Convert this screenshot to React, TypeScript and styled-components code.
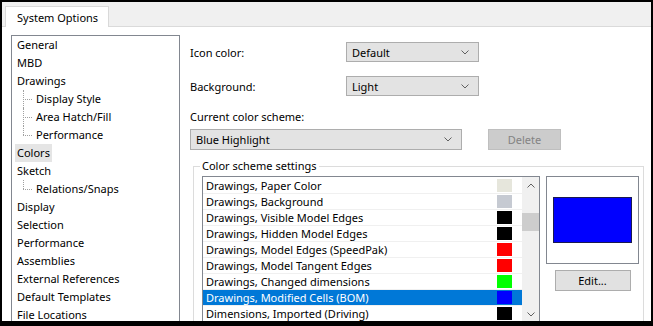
import React from "react";
import styled, { createGlobalStyle } from "styled-components";

const GlobalStyle = createGlobalStyle`
  html, body {
    margin: 0;
    padding: 0;
    background: #000;
  }
  body {
    font-family: "Noto Sans", "Open Sans", sans-serif;
    font-size: 11px;
    color: #000;
  }
`;

const Frame = styled.div`
  width: 653px;
  height: 326px;
  box-sizing: border-box;
  border: solid #000;
  border-width: 2px 2px 5px 2px;
  background: #fff;
  overflow: hidden;
  display: flex;
  flex-direction: column;
`;

const TabStrip = styled.div`
  height: 24px;
  background: #f0f0f0;
  border-bottom: 1px solid #dadada;
  display: flex;
  align-items: flex-end;
  padding-left: 3px;
  flex-shrink: 0;
`;

const Tab = styled.div`
  height: 20px;
  margin-bottom: -1px;
  padding: 0 10px 0 11px;
  background: #fff;
  border: 1px solid #d9d9d9;
  border-bottom: none;
  display: flex;
  align-items: center;
`;

const Body = styled.div`
  flex: 1;
  display: flex;
  padding: 8px 0 0 9px;
  gap: 10px;
  min-height: 0;
`;

const Tree = styled.div`
  width: 167px;
  flex-shrink: 0;
  border: 1px solid #828790;
  border-bottom: none;
`;

const TreeItem = styled.div<{ $child?: boolean; $selected?: boolean; $last?: boolean }>`
  position: relative;
  height: 18px;
  line-height: 18px;
  margin-left: ${({ $child }) => ($child ? "22px" : "3px")};
  padding: 0 2px;
  width: fit-content;
  background: ${({ $selected }) => ($selected ? "#e5e5e5" : "transparent")};
  white-space: nowrap;

  ${({ $child, $last }) =>
    $child &&
    `
    &::before {
      content: "";
      position: absolute;
      left: -11px;
      top: 0;
      height: ${$last ? "9px" : "18px"};
      border-left: 1px dotted #a0a0a0;
    }
    &::after {
      content: "";
      position: absolute;
      left: -11px;
      top: 9px;
      width: 9px;
      border-top: 1px dotted #a0a0a0;
    }
  `}
`;

const Main = styled.div`
  flex: 1;
  display: flex;
  flex-direction: column;
  padding-top: 7px;
  padding-right: 8px;
  min-height: 0;

  & > * {
    flex-shrink: 0;
  }
`;

const FieldRow = styled.div`
  display: flex;
  align-items: center;
  height: 20px;
  margin-bottom: 14px;
`;

const Label = styled.div<{ $width?: number }>`
  width: ${({ $width }) => ($width ? `${$width}px` : "auto")};
  flex-shrink: 0;
`;

const Combo = styled.div<{ $width: number }>`
  width: ${({ $width }) => $width}px;
  height: 100%;
  box-sizing: border-box;
  background: #e3e3e3;
  border: 1px solid #adadad;
  display: flex;
  align-items: center;
  justify-content: space-between;
  padding: 0 9px 0 5px;
`;

const SchemeLabel = styled.div`
  height: 14px;
  line-height: 14px;
  margin: 0 0 5px;
`;

const SchemeRow = styled.div`
  display: flex;
  align-items: center;
  height: 21px;
  gap: 26px;
`;

const Button = styled.div<{ $disabled?: boolean; $width: number }>`
  width: ${({ $width }) => $width}px;
  height: 21px;
  box-sizing: border-box;
  display: flex;
  align-items: center;
  justify-content: center;
  background: ${({ $disabled }) => ($disabled ? "#cccccc" : "#e1e1e1")};
  border: 1px solid ${({ $disabled }) => ($disabled ? "#bfbfbf" : "#adadad")};
  color: ${({ $disabled }) => ($disabled ? "#838383" : "#000")};
`;

const Group = styled.fieldset`
  margin: 10px 0 0 3px;
  padding: 4px 4px 0 8px;
  border: 1px solid #dcdcdc;
  border-bottom: none;
  display: flex;
  align-items: flex-start;
  gap: 6px;
  min-width: 0;
`;

const Legend = styled.legend`
  padding: 0 2px;
  margin-left: -2px;
  line-height: 12px;
`;

const ListBox = styled.div`
  width: 336px;
  height: 146px;
  border: 1px solid #828790;
  border-bottom: none;
  display: flex;
  flex-shrink: 0;
`;

const Rows = styled.div`
  flex: 1;
  padding-top: 1px;
`;

const Row = styled.div<{ $selected?: boolean }>`
  height: 16px;
  box-sizing: border-box;
  border-bottom: 1px solid #f0f0f0;
  display: flex;
  align-items: center;
  justify-content: space-between;
  padding: 0 10px 0 3px;
  background: ${({ $selected }) => ($selected ? "#0078d7" : "transparent")};
  color: ${({ $selected }) => ($selected ? "#fff" : "#000")};
  white-space: nowrap;
`;

const Swatch = styled.div<{ $color: string }>`
  width: 15px;
  height: 13px;
  background: ${({ $color }) => $color};
`;

const ScrollBar = styled.div`
  width: 17px;
  background: #f0f0f0;
  display: flex;
  flex-direction: column;
  align-items: center;
`;

const ScrollArrow = styled.div`
  height: 17px;
  display: flex;
  align-items: center;
  justify-content: center;
`;

const Thumb = styled.div`
  width: 17px;
  height: 18px;
  margin-top: 19px;
  background: #cdcdcd;
`;

const Track = styled.div`
  flex: 1;
`;

const Side = styled.div`
  display: flex;
  flex-direction: column;
  align-items: center;
  gap: 6px;
`;

const Preview = styled.div`
  width: 91px;
  height: 86px;
  border: 1px solid #828790;
  display: flex;
  align-items: center;
  justify-content: center;
`;

const PreviewFill = styled.div<{ $color: string }>`
  width: 79px;
  height: 46px;
  box-sizing: border-box;
  background: ${({ $color }) => $color};
  border: 1px solid #1a1a50;
`;

const Chevron = ({ up }: { up?: boolean }) => (
  <svg width="8" height="5" viewBox="0 0 8 5">
    <path
      d={up ? "M0.5 4.5 L4 1 L7.5 4.5" : "M0.5 0.5 L4 4 L7.5 0.5"}
      fill="none"
      stroke="#606060"
      strokeWidth="1"
    />
  </svg>
);

const tree: { label: string; child?: boolean; last?: boolean; selected?: boolean }[] = [
  { label: "General" },
  { label: "MBD" },
  { label: "Drawings" },
  { label: "Display Style", child: true },
  { label: "Area Hatch/Fill", child: true },
  { label: "Performance", child: true, last: true },
  { label: "Colors", selected: true },
  { label: "Sketch" },
  { label: "Relations/Snaps", child: true, last: true },
  { label: "Display" },
  { label: "Selection" },
  { label: "Performance" },
  { label: "Assemblies" },
  { label: "External References" },
  { label: "Default Templates" },
  { label: "File Locations" },
];

const colorRows = [
  { label: "Drawings, Paper Color", color: "#e6e6dc" },
  { label: "Drawings, Background", color: "#c6cad2" },
  { label: "Drawings, Visible Model Edges", color: "#000000" },
  { label: "Drawings, Hidden Model Edges", color: "#000000" },
  { label: "Drawings, Model Edges (SpeedPak)", color: "#ff0000" },
  { label: "Drawings, Model Tangent Edges", color: "#ff0000" },
  { label: "Drawings, Changed dimensions", color: "#00ff00" },
  { label: "Drawings, Modified Cells (BOM)", color: "#0000ff", selected: true },
  { label: "Dimensions, Imported (Driving)", color: "#000000" },
];

export default function App() {
  return (
    <>
      <GlobalStyle />
      <Frame>
        <TabStrip>
          <Tab>System Options</Tab>
        </TabStrip>
        <Body>
          <Tree>
            {tree.map((t, i) => (
              <TreeItem key={i} $child={t.child} $last={t.last} $selected={t.selected}>
                {t.label}
              </TreeItem>
            ))}
          </Tree>
          <Main>
            <FieldRow>
              <Label $width={156}>Icon color:</Label>
              <Combo $width={133}>
                Default
                <Chevron />
              </Combo>
            </FieldRow>
            <FieldRow>
              <Label $width={156}>Background:</Label>
              <Combo $width={133}>
                Light
                <Chevron />
              </Combo>
            </FieldRow>
            <SchemeLabel>Current color scheme:</SchemeLabel>
            <SchemeRow>
              <Combo $width={272}>
                Blue Highlight
                <Chevron />
              </Combo>
              <Button $disabled $width={73}>
                Delete
              </Button>
            </SchemeRow>
            <Group>
              <Legend>Color scheme settings</Legend>
              <ListBox>
                <Rows>
                  {colorRows.map((r, i) => (
                    <Row key={i} $selected={r.selected}>
                      {r.label}
                      <Swatch $color={r.color} />
                    </Row>
                  ))}
                </Rows>
                <ScrollBar>
                  <ScrollArrow>
                    <Chevron up />
                  </ScrollArrow>
                  <Thumb />
                  <Track />
                  <ScrollArrow>
                    <Chevron />
                  </ScrollArrow>
                </ScrollBar>
              </ListBox>
              <Side>
                <Preview>
                  <PreviewFill $color="#0000ff" />
                </Preview>
                <Button $width={76}>Edit...</Button>
              </Side>
            </Group>
          </Main>
        </Body>
      </Frame>
    </>
  );
}
